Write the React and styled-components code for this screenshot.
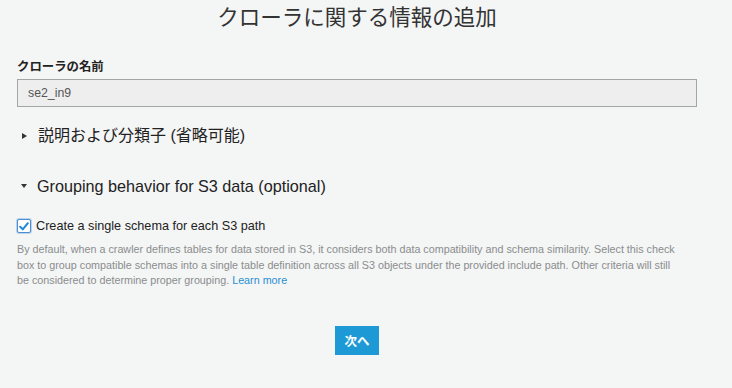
import React from "react";
import styled, { createGlobalStyle } from "styled-components";

const Global = createGlobalStyle`
  html, body { margin: 0; padding: 0; background: #f4f5f5; }
  body { font-family: "Liberation Sans", Arial, "Noto Sans CJK JP", sans-serif; color: #333; }
`;

const Page = styled.div`
  padding: 0 35px 0 17px;
  display: flex;
  flex-direction: column;
`;

const Title = styled.h1`
  margin: 0;
  font-size: 21.5px;
  font-weight: 400;
  line-height: 36px;
  text-align: center;
  color: #333;
  font-family: "Liberation Sans", "Noto Sans CJK JP", sans-serif;
`;

const FieldLabel = styled.label`
  margin-top: 23px;
  font-size: 12.4px;
  font-weight: 700;
  line-height: 16px;
  color: #222;
  font-family: "Liberation Sans", "Noto Sans CJK JP", sans-serif;
`;

const TextInput = styled.input`
  margin-top: 4px;
  height: 28px;
  box-sizing: border-box;
  border: 1px solid #a3a6a6;
  background: #eeeeee;
  padding: 0 10px;
  font-family: "Liberation Sans", Arial, sans-serif;
  font-size: 12.3px;
  color: #555;
  outline: none;
`;

const SectionHeader = styled.div`
  margin-top: ${(p) => p.$gap}px;
  display: flex;
  align-items: center;
  gap: 9px;
  padding-left: ${(p) => (p.$open ? 4 : 5)}px;
  font-size: ${(p) => p.$size || 16}px;
  line-height: 20px;
  color: #222;
  font-family: "Liberation Sans", "Noto Sans CJK JP", sans-serif;
`;

const Caret = styled.span`
  width: 0;
  height: 0;
  ${(p) =>
    p.$open
      ? `border-left: 3.5px solid transparent; border-right: 3.5px solid transparent; border-top: 4px solid #333; margin-right: 1px;`
      : `border-top: 3.5px solid transparent; border-bottom: 3.5px solid transparent; border-left: 5px solid #333; margin-right: 2px;`}
`;

const CheckRow = styled.label`
  margin-top: 22px;
  display: flex;
  align-items: center;
  gap: 5px;
  font-size: 12.67px;
  line-height: 16px;
  color: #222;
`;

const Box = styled.span`
  width: 14px;
  height: 14px;
  box-sizing: border-box;
  border: 1px solid #4d8fd1;
  border-radius: 2px;
  background: #fff;
  box-shadow: 0 0 0 1px rgba(80, 150, 230, 0.35);
  display: flex;
  align-items: center;
  justify-content: center;
`;

const Description = styled.p`
  margin: 8px 0 0;
  font-size: 10.75px;
  line-height: 15.7px;
  color: #8a8d8e;
  padding-right: 15px;
`;

const Link = styled.a`
  color: #2a8fd3;
  text-decoration: none;
`;

const Footer = styled.div`
  display: flex;
  justify-content: center;
  margin-top: 37px;
`;

const Button = styled.button`
  height: 29px;
  width: 44px;
  border: none;
  background: #1d9ad6;
  color: #fff;
  font-weight: 700;
  font-size: 12.5px;
  font-family: "Noto Sans CJK JP", sans-serif;
  padding: 0;
`;

export default function App() {
  return (
    <>
      <Global />
      <Page>
        <Title>クローラに関する情報の追加</Title>
        <FieldLabel>クローラの名前</FieldLabel>
        <TextInput defaultValue="se2_in9" readOnly />
        <SectionHeader $gap={19}>
          <Caret />
          説明および分類子 (省略可能)
        </SectionHeader>
        <SectionHeader $gap={30} $open $size={16.2}>
          <Caret $open />
          Grouping behavior for S3 data (optional)
        </SectionHeader>
        <CheckRow>
          <Box>
            <svg width="10" height="9" viewBox="0 0 10 9">
              <path d="M1.2 4.8 L3.8 7.4 L8.8 1.2" fill="none" stroke="#1f86d6" strokeWidth="2" strokeLinecap="round" strokeLinejoin="round" />
            </svg>
          </Box>
          Create a single schema for each S3 path
        </CheckRow>
        <Description>
          By default, when a crawler defines tables for data stored in S3, it considers both data compatibility and schema similarity. Select this check box to group compatible schemas into a single table definition across all S3 objects under the provided include path. Other criteria will still be considered to determine proper grouping.{" "}
          <Link href="#">Learn more</Link>
        </Description>
        <Footer>
          <Button>次へ</Button>
        </Footer>
      </Page>
    </>
  );
}
